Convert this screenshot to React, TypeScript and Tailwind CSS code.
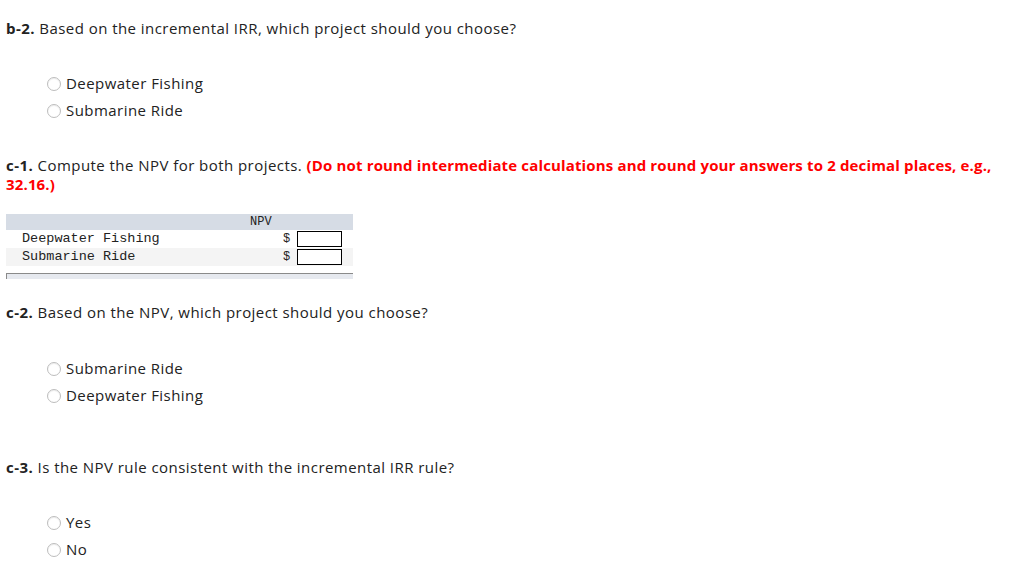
import React from 'react';

const Radio = ({ label }: { label: string }) => (
  <label className="flex items-center h-[27px] gap-[5px]">
    <span className="w-[14px] h-[14px] rounded-full border border-[#bdbdbd] bg-white shadow-[inset_0_1px_1px_rgba(0,0,0,0.08)]" />
    <span className="text-[15px] text-[#222]">{label}</span>
  </label>
);

const Options = ({ items }: { items: string[] }) => (
  <div className="pl-[47px] flex flex-col">
    {items.map((it) => (
      <Radio key={it} label={it} />
    ))}
  </div>
);

export default function App() {
  return (
    <div className="w-[1024px] h-[586px] bg-white text-[#222] font-['Open_Sans',sans-serif] tracking-[0.45px] overflow-hidden">
      <div className="pt-[19px] pl-[6px] text-[15px] leading-[19px]">
        <b>b-2.</b> Based on the incremental IRR, which project should you choose?
      </div>
      <div className="mt-[32px]">
        <Options items={['Deepwater Fishing', 'Submarine Ride']} />
      </div>

      <div className="mt-[32px] pl-[6px] w-[1000px] text-[15px] leading-[19px]">
        <b>c-1.</b> Compute the NPV for both projects.{' '}
        <b className="text-[#ff0000] tracking-[0.15px]">
          (Do not round intermediate calculations and round your answers to 2 decimal places, e.g., 32.16.)
        </b>
      </div>

      <div className="mt-[20px] ml-[6px] w-[347px] font-['Liberation_Mono',monospace] tracking-normal text-[13.5px] text-[#222]">
        <div className="h-[16px] bg-[#d6dce5] flex items-center">
          <span className="ml-[244px] text-[12px] leading-none">NPV</span>
        </div>
        <div className="h-[18px] bg-white flex items-center">
          <span className="pl-[16px] flex-1">Deepwater Fishing</span>
          <span className="w-[14px] text-[12px]">$</span>
          <span className="w-[45px] h-[16px] border border-black bg-white mr-[11px]" />
        </div>
        <div className="h-[18px] bg-[#f4f4f4] flex items-center">
          <span className="pl-[16px] flex-1">Submarine Ride</span>
          <span className="w-[14px] text-[12px]">$</span>
          <span className="w-[45px] h-[16px] border border-black bg-white mr-[11px]" />
        </div>
        <div className="mt-[7px] h-[6px] bg-[#e6e9ef] border-t border-l border-[#8a8a8a]" />
      </div>

      <div className="mt-[24px] pl-[6px] text-[15px] leading-[19px]">
        <b>c-2.</b> Based on the NPV, which project should you choose?
      </div>
      <div className="mt-[33px]">
        <Options items={['Submarine Ride', 'Deepwater Fishing']} />
      </div>

      <div className="mt-[49px] pl-[6px] text-[15px] leading-[19px]">
        <b>c-3.</b> Is the NPV rule consistent with the incremental IRR rule?
      </div>
      <div className="mt-[32px]">
        <Options items={['Yes', 'No']} />
      </div>
    </div>
  );
}
